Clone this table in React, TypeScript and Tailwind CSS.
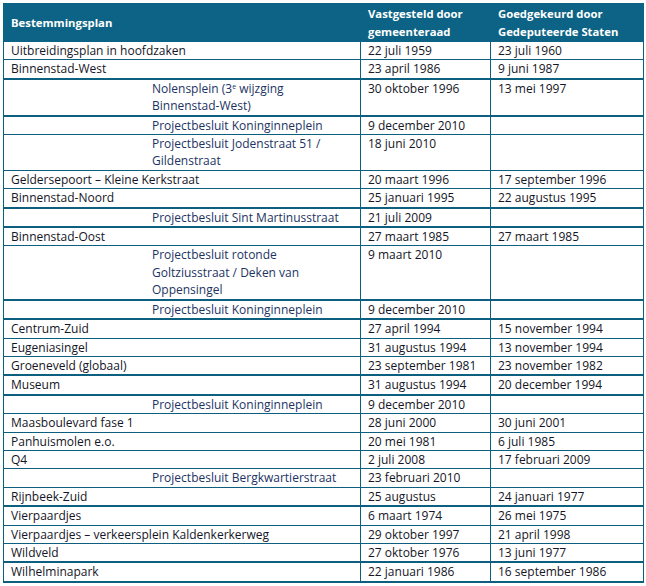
import type { ReactNode } from 'react';

type Rij = {
  naam: ReactNode;
  sub?: boolean;
  dik?: boolean;
  vastgesteld?: string;
  goedgekeurd?: string;
};

const rijen: Rij[] = [
  { naam: 'Uitbreidingsplan in hoofdzaken', vastgesteld: '22 juli 1959', goedgekeurd: '23 juli 1960' },
  { naam: 'Binnenstad-West', dik: true, vastgesteld: '23 april 1986', goedgekeurd: '9 juni 1987' },
  {
    naam: (
      <>
        Nolensplein (3<sup className="text-[7px]">e</sup> wijzging
        <br />
        Binnenstad-West)
      </>
    ),
    sub: true,
    dik: true,
    vastgesteld: '30 oktober 1996',
    goedgekeurd: '13 mei 1997',
  },
  { naam: 'Projectbesluit Koninginneplein', sub: true, vastgesteld: '9 december 2010' },
  {
    naam: (
      <>
        Projectbesluit Jodenstraat 51 /
        <br />
        Gildenstraat
      </>
    ),
    sub: true,
    vastgesteld: '18 juni 2010',
  },
  { naam: 'Geldersepoort – Kleine Kerkstraat', vastgesteld: '20 maart 1996', goedgekeurd: '17 september 1996' },
  { naam: 'Binnenstad-Noord', dik: true, vastgesteld: '25 januari 1995', goedgekeurd: '22 augustus 1995' },
  { naam: 'Projectbesluit Sint Martinusstraat', sub: true, dik: true, vastgesteld: '21 juli 2009' },
  { naam: 'Binnenstad-Oost', vastgesteld: '27 maart 1985', goedgekeurd: '27 maart 1985' },
  {
    naam: (
      <>
        Projectbesluit rotonde
        <br />
        Goltziusstraat / Deken van
        <br />
        Oppensingel
      </>
    ),
    sub: true,
    dik: true,
    vastgesteld: '9 maart 2010',
  },
  { naam: 'Projectbesluit Koninginneplein', sub: true, dik: true, vastgesteld: '9 december 2010' },
  { naam: 'Centrum-Zuid', vastgesteld: '27 april 1994', goedgekeurd: '15 november 1994' },
  { naam: 'Eugeniasingel', vastgesteld: '31 augustus 1994', goedgekeurd: '13 november 1994' },
  { naam: 'Groeneveld (globaal)', dik: true, vastgesteld: '23 september 1981', goedgekeurd: '23 november 1982' },
  { naam: 'Museum', dik: true, vastgesteld: '31 augustus 1994', goedgekeurd: '20 december 1994' },
  { naam: 'Projectbesluit Koninginneplein', sub: true, vastgesteld: '9 december 2010' },
  { naam: 'Maasboulevard fase 1', vastgesteld: '28 juni 2000', goedgekeurd: '30 juni 2001' },
  { naam: 'Panhuismolen e.o.', vastgesteld: '20 mei 1981', goedgekeurd: '6 juli 1985' },
  { naam: 'Q4', vastgesteld: '2 juli 2008', goedgekeurd: '17 februari 2009' },
  { naam: 'Projectbesluit Bergkwartierstraat', sub: true, vastgesteld: '23 februari 2010' },
  { naam: 'Rijnbeek-Zuid', dik: true, vastgesteld: '25 augustus', goedgekeurd: '24 januari 1977' },
  { naam: 'Vierpaardjes', vastgesteld: '6 maart 1974', goedgekeurd: '26 mei 1975' },
  { naam: 'Vierpaardjes – verkeersplein Kaldenkerkerweg', vastgesteld: '29 oktober 1997', goedgekeurd: '21 april 1998' },
  { naam: 'Wildveld', dik: true, vastgesteld: '27 oktober 1976', goedgekeurd: '13 juni 1977' },
  { naam: 'Wilhelminapark', dik: true, vastgesteld: '22 januari 1986', goedgekeurd: '16 september 1986' },
];

export default function App() {
  return (
    <div className="bg-white w-[646px] h-[586px] pt-[3px] pl-[3px] font-['Open_Sans',sans-serif] text-[12px] font-medium text-[#141526]">
      <table className="table-fixed border-collapse w-[640px]">
        <colgroup>
          <col className="w-[357px]" />
          <col className="w-[130px]" />
          <col className="w-[153px]" />
        </colgroup>
        <thead>
          <tr className="bg-[#0d6385] text-white font-bold text-[11.3px] leading-[18px]">
            <th className="text-left align-middle px-[7px] pt-[1px] border border-[#0d6385]">Bestemmingsplan</th>
            <th className="text-left align-top px-[7px] pt-[1px] border border-[#0d6385]">
              Vastgesteld door
              <br />
              gemeenteraad
            </th>
            <th className="text-left align-top px-[7px] pt-[1px] border border-[#0d6385]">
              Goedgekeurd door
              <br />
              Gedeputeerde Staten
            </th>
          </tr>
        </thead>
        <tbody className="leading-[17.4px]">
          {rijen.map((r, i) => {
            const rand = r.dik
              ? 'align-top border border-b-2 border-[#0d5f80]'
              : 'align-top border border-[#0d5f80]';
            return (
              <tr key={i}>
                <td className={r.sub ? `${rand} pl-[148px] pr-1 text-[#1c3363]` : `${rand} px-[7px]`}>
                  {r.naam}
                </td>
                <td className={`${rand} px-[7px]`}>{r.vastgesteld}</td>
                <td className={`${rand} px-[7px]`}>{r.goedgekeurd}</td>
              </tr>
            );
          })}
        </tbody>
      </table>
    </div>
  );
}
